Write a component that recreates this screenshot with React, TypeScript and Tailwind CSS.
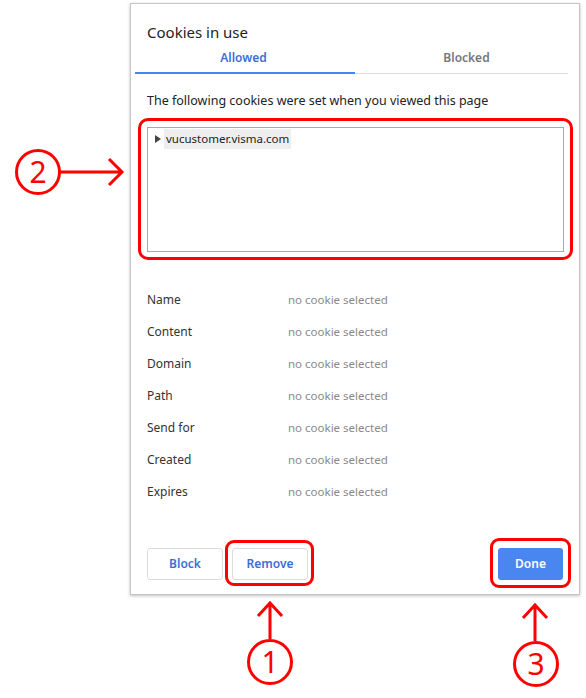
import React from 'react';

const rows = ['Name', 'Content', 'Domain', 'Path', 'Send for', 'Created', 'Expires'];

function Callout({ n, cx, cy }: { n: string; cx: number; cy: number }) {
  return (
    <div
      className="absolute flex h-[46px] w-[46px] items-center justify-center rounded-full border-[3px] border-[#f00] text-[30px] leading-none text-[#f00]"
      style={{ left: cx - 23, top: cy - 23 }}
    >
      <span className="-mt-[1px]">{n}</span>
    </div>
  );
}

export default function App() {
  return (
    <div className="relative h-[698px] w-[586px] bg-white font-['Noto_Sans','Open_Sans',sans-serif] text-[#333]">
      <div className="ml-[130px] pt-[3px]">
        <div className="flex h-[592px] w-[450px] flex-col border border-[#c6c6c6] bg-white shadow-[0_1px_3px_rgba(0,0,0,0.25)]">
          <div className="pl-4 pt-[18px] text-[15px] leading-5 text-[#222]">Cookies in use</div>

          <div className="mx-[4px] mt-[1px] flex h-[31px] w-[433px] text-[12px] font-semibold">
            <div className="flex w-[220px] items-center justify-center border-b-2 border-[#4285f4] pr-[3px] text-[#3b6fd6]">Allowed</div>
            <div className="flex flex-1 items-center justify-center border-b border-[#dedede] pl-[10px] text-[#777]">Blocked</div>
          </div>

          <div className="pl-4 pt-[19px] text-[12.5px] leading-4 text-[#222]">The following cookies were set when you viewed this page</div>

          <div className="ml-4 mt-[18px] h-[125px] w-[417px] border border-[#a8a8a8] p-[1px]">
            <div className="flex items-center">
              <svg width="6" height="8" viewBox="0 0 6 8" className="ml-[6px] mr-[3px]">
                <path d="M0 0 L6 4 L0 8 Z" fill="#444" />
              </svg>
              <span className="bg-[#eeeeee] px-[2px] py-[2px] text-[11.5px] leading-4 text-[#222]">vucustomer.visma.com</span>
            </div>
          </div>

          <div className="mt-[32px] flex flex-col pl-4 text-[12px]">
            {rows.map((r) => (
              <div key={r} className="flex h-8 items-center">
                <span className="w-[141px] text-[#333]">{r}</span>
                <span className="text-[11.5px] text-[#8a8a8a]">no cookie selected</span>
              </div>
            ))}
          </div>

          <div className="mt-auto mb-[14px] flex items-center px-4 text-[12px] font-semibold">
            <button className="h-[32px] w-[76px] rounded-[3px] border border-[#dadce0] text-[#3b6fd6]">Block</button>
            <button className="ml-[9px] h-[32px] w-[76px] rounded-[3px] border border-[#dadce0] text-[#3b6fd6]">Remove</button>
            <button className="ml-auto h-[32px] w-[65px] rounded-[3px] bg-[#4a86f0] text-white">Done</button>
          </div>
        </div>
      </div>

      {/* annotations */}
      <div className="absolute left-[138px] top-[118px] h-[142px] w-[435px] rounded-[10px] border-[3px] border-[#f00]" />
      <div className="absolute left-[225px] top-[540px] h-[46px] w-[89px] rounded-[9px] border-[3px] border-[#f00]" />
      <div className="absolute left-[490px] top-[538px] h-[50px] w-[81px] rounded-[9px] border-[3px] border-[#f00]" />

      <svg className="absolute left-0 top-0" width="586" height="698" fill="none" stroke="#f00" strokeWidth="3">
        <path d="M60 172 H121 M109 159 L122 172 L109 185" />
        <path d="M270 639 V603 M258 616 L270 603 L282 616" />
        <path d="M535 641 V605 M523 618 L535 605 L547 618" />
      </svg>

      <Callout n="2" cx={38} cy={172} />
      <Callout n="1" cx={270} cy={662} />
      <Callout n="3" cx={536} cy={664} />
    </div>
  );
}
